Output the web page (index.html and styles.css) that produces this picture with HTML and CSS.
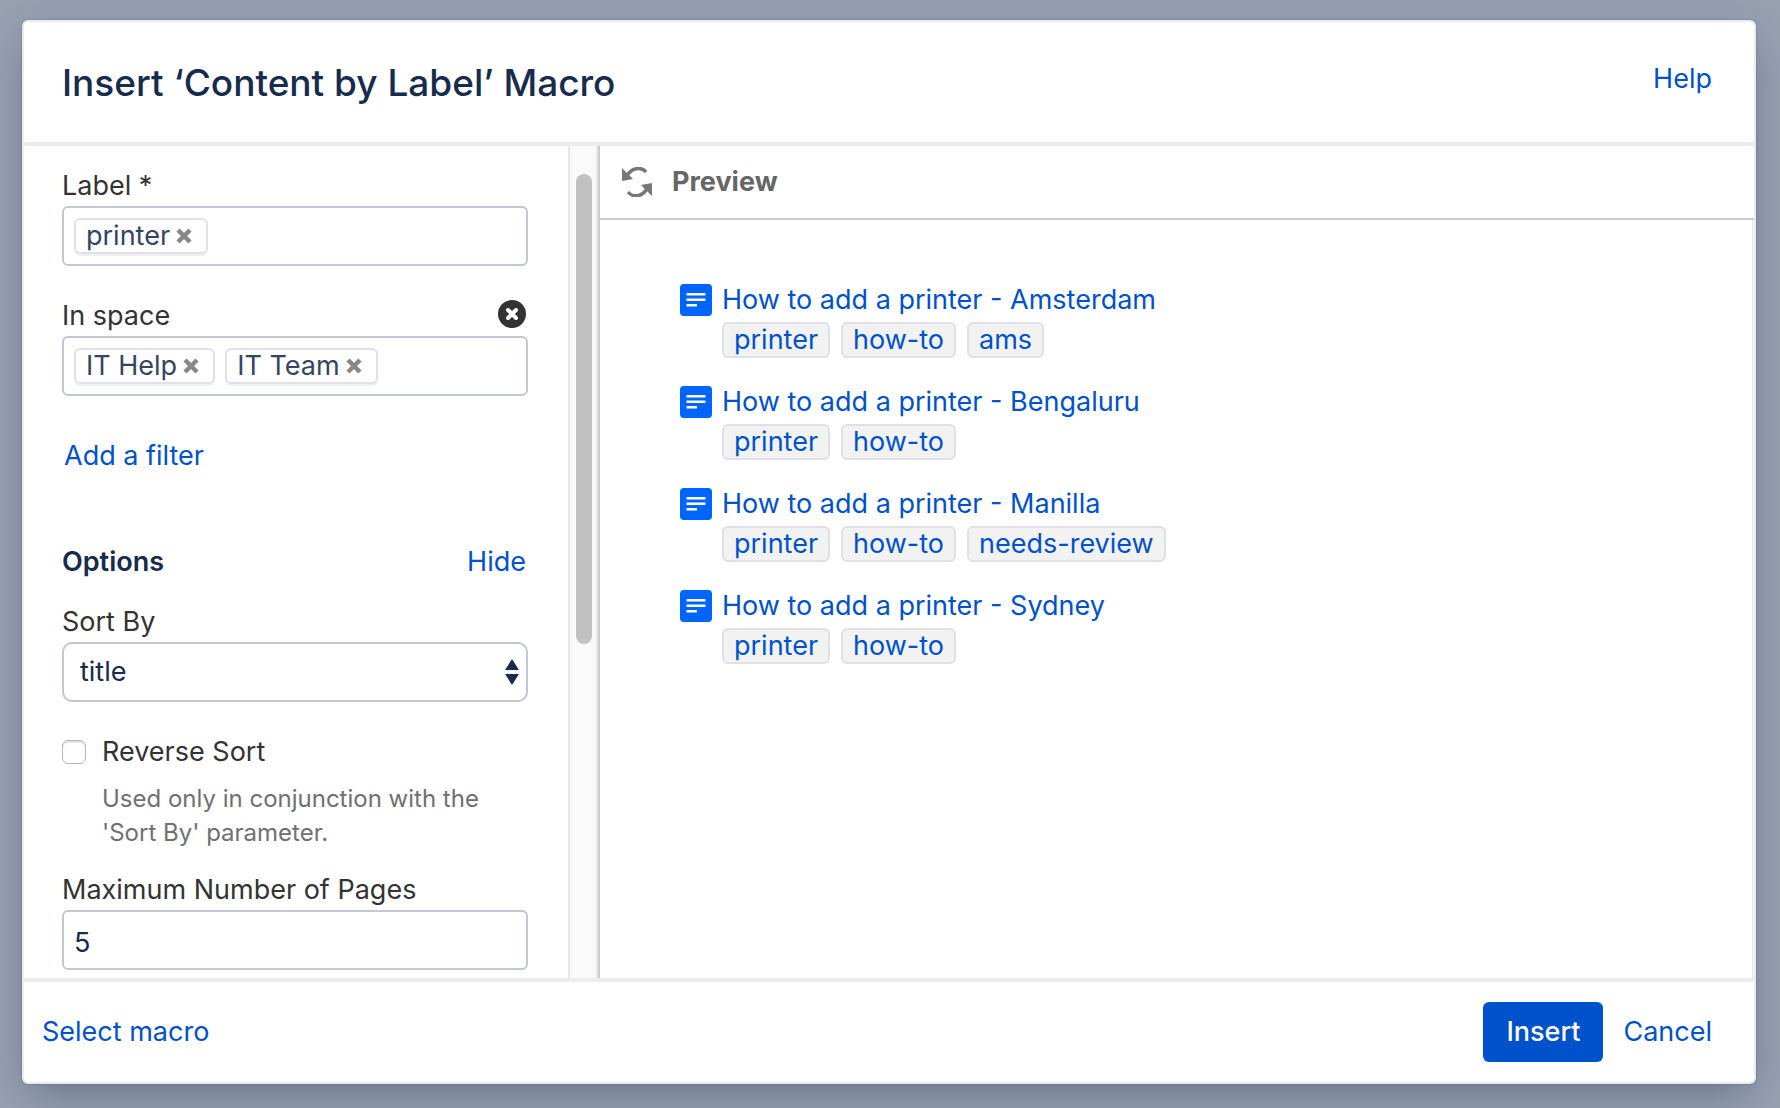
FILE: index.html
```html
<!DOCTYPE html>
<html lang="en">
<head>
<meta charset="utf-8">
<title>Insert ‘Content by Label’ Macro</title>
<link rel="stylesheet" href="styles.css">
</head>
<body>
<svg class="sprite" width="0" height="0" aria-hidden="true">
  <symbol id="cross" viewBox="0 0 16 16"><path d="M2 2l12 12M14 2L2 14" fill="none" stroke="currentColor" stroke-width="4.500"/></symbol>
  <symbol id="page" viewBox="0 0 32 32"><rect width="32" height="32" rx="4" fill="#0065ff"/><path d="M6.500 10.300h19M6.500 15.800h19M6.500 21.300h10.500" stroke="#fff" stroke-width="2.400"/></symbol>
</svg>
<main class="dialog" role="dialog" aria-labelledby="dialog-title">
  <header class="dialog-header">
    <h1 id="dialog-title">Insert ‘Content by Label’ Macro</h1>
    <a class="help" href="#">Help</a>
  </header>
  <div class="dialog-body">
    <form class="params">
      <div class="fields">
        <div class="field">
          <label for="label-input">Label *</label>
          <div class="box token-box">
            <span class="token">printer<button type="button" aria-label="Remove printer"><svg><use href="#cross"/></svg></button></span>
            <input id="label-input" type="text">
          </div>
        </div>
        <div class="field">
          <div class="label-row">
            <label for="space-input">In space</label>
            <button class="clear" type="button" aria-label="Remove filter"><svg viewBox="0 0 28 28"><circle cx="14" cy="14" r="14" fill="#333"/><path d="M10 10l8 8M18 10l-8 8" stroke="#fff" stroke-width="4" stroke-linecap="round"/></svg></button>
          </div>
          <div class="box token-box">
            <span class="token">IT Help<button type="button" aria-label="Remove IT Help"><svg><use href="#cross"/></svg></button></span>
            <span class="token">IT Team<button type="button" aria-label="Remove IT Team"><svg><use href="#cross"/></svg></button></span>
            <input id="space-input" type="text">
          </div>
        </div>
        <a class="add-filter" href="#">Add a filter</a>
        <div class="options-head">
          <h2>Options</h2>
          <a href="#">Hide</a>
        </div>
        <div class="field">
          <label for="sort">Sort By</label>
          <div class="select-wrap">
            <select id="sort" class="box"><option>title</option><option>creation</option><option>modified</option></select>
            <svg class="arrows" viewBox="0 0 14 26" aria-hidden="true"><path d="M7 0l7 11H0zM7 26l7-11H0z" fill="#172b4d"/></svg>
          </div>
        </div>
        <div class="check-field">
          <input id="reverse" type="checkbox" aria-describedby="reverse-help">
          <label for="reverse">Reverse Sort</label>
          <p id="reverse-help">Used only in conjunction with the 'Sort By' parameter.</p>
        </div>
        <div class="field">
          <label for="max">Maximum Number of Pages</label>
          <input id="max" class="box number" type="text" value="5">
        </div>
      </div>
      <div class="track" aria-hidden="true"><div class="thumb"></div></div>
    </form>
    <section class="preview">
      <div class="preview-head">
        <button type="button" aria-label="Refresh preview"><svg viewBox="0 0 30 30"><path d="M5 9C9 1 19-1 24 5M6 25c5 6 15 5 19-4" fill="none" stroke="#777" stroke-width="3.500"/><path d="M0 1v13l11-2zM30 29V16l-11 2z" fill="#777"/></svg></button>
        <h2>Preview</h2>
      </div>
      <ul class="results">
        <li><svg><use href="#page"/></svg><a href="#">How to add a printer - Amsterdam</a>
          <div class="tags"><a href="#">printer</a><a href="#">how-to</a><a href="#">ams</a></div></li>
        <li><svg><use href="#page"/></svg><a href="#">How to add a printer - Bengaluru</a>
          <div class="tags"><a href="#">printer</a><a href="#">how-to</a></div></li>
        <li><svg><use href="#page"/></svg><a href="#">How to add a printer - Manilla</a>
          <div class="tags"><a href="#">printer</a><a href="#">how-to</a><a href="#">needs-review</a></div></li>
        <li><svg><use href="#page"/></svg><a href="#">How to add a printer - Sydney</a>
          <div class="tags"><a href="#">printer</a><a href="#">how-to</a></div></li>
      </ul>
    </section>
  </div>
  <footer class="dialog-footer">
    <a class="select-macro" href="#">Select macro</a>
    <button class="insert" type="button">Insert</button>
    <a href="#">Cancel</a>
  </footer>
</main>
</body>
</html>
```
FILE: styles.css
```css
* { box-sizing: border-box; }
body {
  margin: 0;
  min-height: 100vh;
  padding: 20px 24px 24px 22px;
  display: flex;
  background: #97a0b1;
  color: #333;
  font: 27px/40px Inter, "Liberation Sans", sans-serif;
}
h1, h2, p, ul { margin: 0; padding: 0; }
a { color: #0052cc; text-decoration: none; }
button, input, select { font: inherit; color: inherit; margin: 0; }
button { padding: 0; border: 0; background: none; }
svg { display: block; }
.sprite { position: absolute; }

.dialog {
  flex: 1;
  min-width: 0;
  display: flex;
  flex-direction: column;
  background: #fff;
  border: 2px solid #ebecf0;
  border-radius: 6px;
  box-shadow: 0 0 2px rgba(9, 30, 66, .3), 0 16px 40px -8px rgba(9, 30, 66, .35);
}
.dialog-header {
  display: flex;
  justify-content: space-between;
  align-items: flex-start;
  padding: 37px 42px 35px 38px;
  border-bottom: 4px solid #ebecf0;
}
h1 {
  font-size: 37px;
  line-height: 48px;
  font-weight: 500;
  color: #172b4d;
}
.dialog-body { flex: 1; display: flex; }

.params { flex: none; width: 576px; display: flex; border-right: 2px solid #ccc; }
.fields {
  flex: 1;
  min-width: 0;
  display: flex;
  flex-direction: column;
  gap: 30px;
  padding: 20px 40px 8px 38px;
}
.field label { display: block; }
.label-row { display: flex; justify-content: space-between; align-items: center; padding-right: 2px; }
.clear { margin-bottom: 4px; }
.clear svg { width: 28px; height: 28px; }
.box {
  display: block;
  width: 100%;
  height: 60px;
  border: 2px solid #c1c7d5;
  border-radius: 6px;
  background: #fff;
}
.token-box { display: flex; align-items: center; gap: 10px; padding: 0 10px; }
.token-box input { flex: 1; min-width: 0; border: 0; outline: 0; background: none; }
.token {
  display: flex;
  align-items: center;
  gap: 6px;
  height: 36px;
  padding: 0 14px 0 10px;
  border: 2px solid #dfe1e6;
  border-radius: 6px;
  box-shadow: 0 2px 0 #f1f1f3;
  color: #344563;
  white-space: nowrap;
}
.token svg { width: 16px; height: 16px; color: #888; }
.add-filter { margin: 10px 2px; }
.options-head { display: flex; justify-content: space-between; margin: 26px 2px -10px 0; }
.options-head h2 { font-size: 27px; line-height: 40px; font-weight: 600; color: #172b4d; }
.select-wrap { display: grid; align-items: center; }
.select-wrap > * { grid-area: 1 / 1; }
select.box { appearance: none; padding: 0 40px 0 16px; border-radius: 10px; color: #172b4d; }
.arrows { width: 14px; height: 26px; justify-self: end; margin-right: 9px; pointer-events: none; }
.check-field {
  display: grid;
  grid-template-columns: 24px 1fr;
  column-gap: 16px;
  row-gap: 10px;
  align-items: center;
  margin-bottom: -10px;
}
.check-field input {
  appearance: none;
  width: 24px;
  height: 24px;
  border: 1px solid #b5b5b5;
  border-radius: 6px;
  box-shadow: inset 0 2px 1px #e4e4e4;
}
.check-field p {
  grid-column: 2;
  padding-right: 40px;
  font-size: 24px;
  line-height: 34px;
  color: #707070;
}
.number { padding: 4px 10px 0; color: #172b4d; }
.track {
  flex: none;
  width: 30px;
  padding: 28px 6px 0;
  background: #fafafa;
  border: solid #e8e8e8;
  border-width: 0 2px;
}
.thumb { width: 16px; height: 470px; border-radius: 8px; background: #c1c1c1; }

.preview { flex: 1; min-width: 0; display: flex; flex-direction: column; }
.preview-head {
  display: flex;
  align-items: center;
  gap: 20px;
  height: 74px;
  padding-left: 22px;
  border-bottom: 2px solid #ccc;
}
.preview-head svg { width: 30px; height: 30px; }
.preview-head h2 { font-size: 27px; line-height: 40px; font-weight: 700; color: #666; }
.results {
  flex: 1;
  list-style: none;
  display: flex;
  flex-direction: column;
  gap: 24px;
  padding: 60px 80px;
  border-right: 2px solid #eee;
}
.results li {
  display: grid;
  grid-template-columns: 32px 1fr;
  column-gap: 10px;
  align-items: center;
}
.results svg { width: 32px; height: 32px; }
.tags { grid-column: 2; display: flex; flex-wrap: wrap; gap: 11px; padding-top: 2px; }
.tags a {
  padding: 0 10px;
  line-height: 32px;
  border: 2px solid #dfe1e6;
  border-radius: 6px;
  background: #f2f2f2;
}
.dialog-footer {
  display: flex;
  align-items: center;
  gap: 20px;
  padding: 20px 42px 20px 18px;
  border-top: 4px solid #ebecf0;
}
.select-macro { margin-right: auto; }
.insert {
  width: 120px;
  height: 60px;
  border-radius: 6px;
  background: #0052cc;
  color: #fff;
  font-weight: 500;
}
```
